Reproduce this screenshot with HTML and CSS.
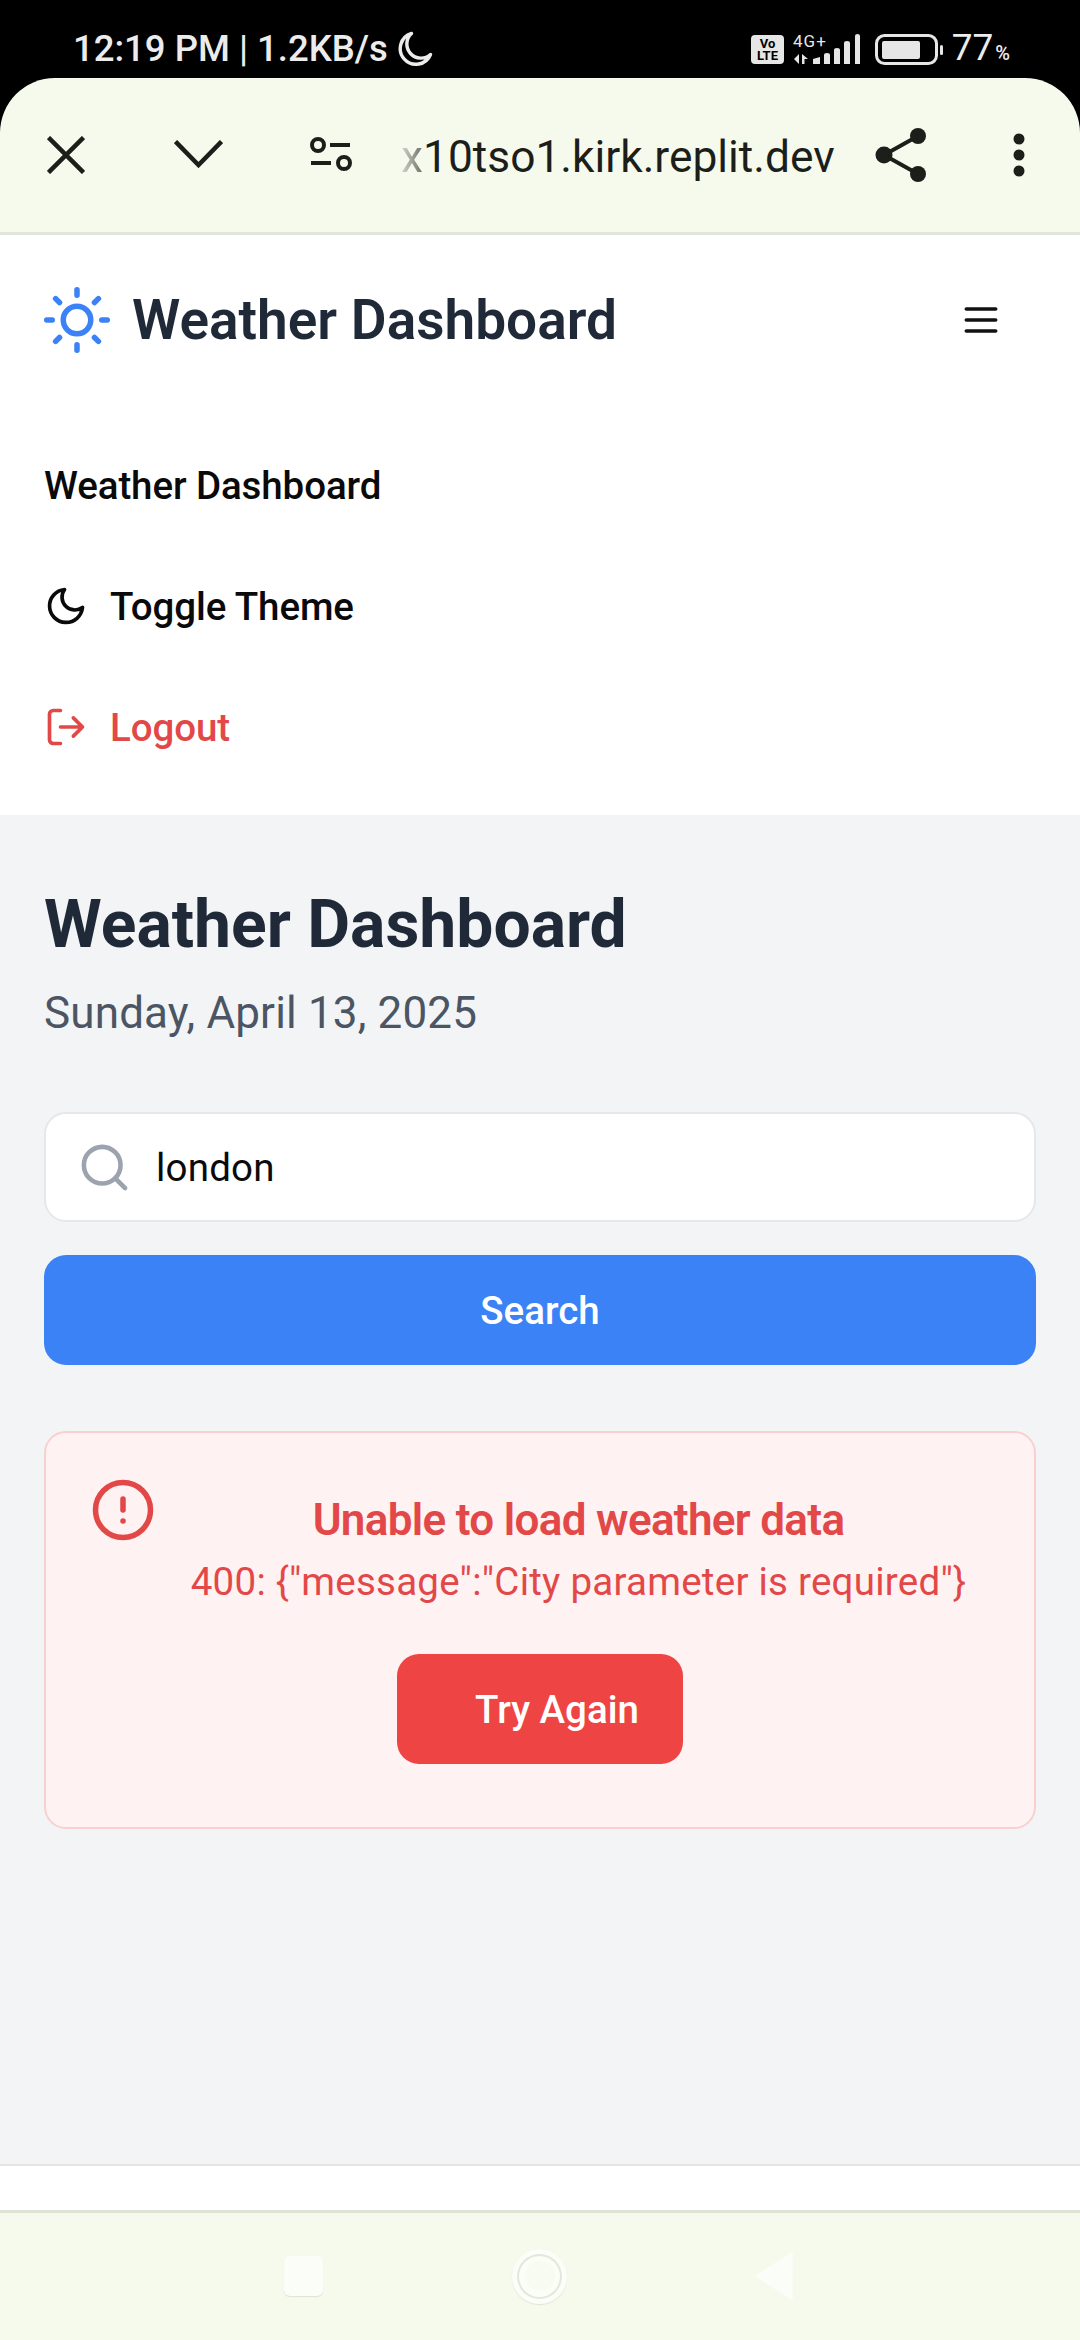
FILE: index.html
```html
<!DOCTYPE html>
<html lang="en">
<head>
<meta charset="UTF-8" />
<title>Weather Dashboard</title>
<meta name="viewport" content="width=device-width,initial-scale=1" />
<link rel="stylesheet" href="styles.css">
</head>
<body>
<div class="status-bar">
  <div class="status-left">
    <span class="status-time">12:19 PM | 1.2KB/s</span>
    <svg class="status-moon" width="36" height="36" viewBox="0 0 36 36" fill="none" stroke="#ececec" stroke-width="3.4"><path d="M33.5 23.5A15.7 15.7 0 1 1 14.5 2.5 13.5 13.5 0 0 0 33.5 23.5z" stroke-linejoin="round"/></svg>
  </div>
  <div class="status-right">
    <svg class="net-icons" width="112" height="34" viewBox="0 0 112 34">
      <rect x="0" y="2" width="33" height="29" rx="4" fill="#e6e6e6"/>
      <text x="16.5" y="14.5" class="volte-text">Vo</text>
      <text x="16.5" y="27" class="volte-text">LTE</text>
      <text x="42" y="14" class="net-text">4G+</text>
      <path d="M48 21v10l-5-5zM51 21l6 5h-3.500V31H51z" fill="#e6e6e6"/>
      <path d="M62 26l7-2v7h-7zM73 22q0-2 3-2t3 2v9h-6zM83 17q0-2 3-2t3 2v14h-6zM93 10q0-2 3-2t3 2v21h-6zM104 3q0-2 2.500-2t2.500 2v28h-5z" fill="#e6e6e6"/>
    </svg>
    <svg class="battery" width="70" height="32" viewBox="0 0 70 32">
      <rect x="1.500" y="1.500" width="60" height="28" rx="8" fill="none" stroke="#e6e6e6" stroke-width="3"/>
      <rect x="7" y="7" width="38" height="18" rx="2" fill="#e6e6e6"/>
      <rect x="65" y="11" width="3" height="10" rx="1.500" fill="#e6e6e6"/>
    </svg>
    <span class="battery-num">77<span class="battery-pct">%</span></span>
  </div>
</div>

<div class="toolbar">
  <svg class="tb-close" width="38" height="38" viewBox="0 0 38 38" fill="none" stroke="#1c1e1a" stroke-width="4.500"><path d="M1.500 1.500l35 35M36.500 1.500l-35 35"/></svg>
  <svg class="tb-chevron" width="49" height="28" viewBox="0 0 49 28" fill="none" stroke="#1c1e1a" stroke-width="4.500"><path d="M1.500 1.500L24.500 25 47.500 1.500"/></svg>
  <svg class="tb-tune" width="42" height="36" viewBox="0 0 42 36" fill="none" stroke="#1c1e1a" stroke-width="4"><circle cx="8" cy="8" r="6"/><path d="M20 8h20M1 26h20"/><circle cx="34" cy="26" r="6"/></svg>
  <div class="tb-url"><span class="tb-url-fade">x</span>10tso1.kirk.replit.dev</div>
  <svg class="tb-share" width="52" height="56" viewBox="0 0 52 56" fill="#1c1e1a" stroke="#1c1e1a"><circle cx="43" cy="9" r="8" stroke="none"/><circle cx="9" cy="28" r="8.500" stroke="none"/><circle cx="43" cy="47" r="8" stroke="none"/><path d="M43 9L9 28l34 19" fill="none" stroke-width="4"/></svg>
  <svg class="tb-more" width="12" height="44" viewBox="0 0 12 44" fill="#1c1e1a"><circle cx="6" cy="6" r="5.500"/><circle cx="6" cy="22" r="5.500"/><circle cx="6" cy="38" r="5.500"/></svg>
</div>

<header class="site-header">
  <div class="brand-row">
    <div class="brand">
      <svg class="icon-lg" viewBox="0 0 24 24" fill="none" stroke="#3b82f6" stroke-width="2" stroke-linecap="round" stroke-linejoin="round"><circle cx="12" cy="12" r="5"/><path d="M12 1v2M12 21v2M4.220 4.220l1.420 1.420M18.360 18.360l1.420 1.420M1 12h2M21 12h2M4.220 19.780l1.420-1.420M18.360 5.640l1.420-1.420"/></svg>
      <span class="brand-name">Weather Dashboard</span>
    </div>
    <svg class="menu-btn icon-md" viewBox="0 0 24 24" fill="none" stroke="#111" stroke-width="2" stroke-linecap="round"><path d="M4 6h16M4 12h16M4 18h16"/></svg>
  </div>
  <nav class="nav-list">
    <div class="nav-item">Weather Dashboard</div>
    <div class="nav-item">
      <svg class="icon-md" viewBox="0 0 24 24" fill="none" stroke="currentColor" stroke-width="2" stroke-linecap="round" stroke-linejoin="round"><path d="M21 12.790A9 9 0 1 1 11.210 3 7 7 0 0 0 21 12.790z"/></svg>
      Toggle Theme
    </div>
    <div class="nav-item nav-logout">
      <svg class="icon-md" viewBox="0 0 24 24" fill="none" stroke="currentColor" stroke-width="2" stroke-linecap="round" stroke-linejoin="round"><path d="M9 21H5a2 2 0 0 1-2-2V5a2 2 0 0 1 2-2h4M16 17l5-5-5-5M21 12H9"/></svg>
      Logout
    </div>
  </nav>
</header>

<main class="content">
  <h1 class="page-title">Weather Dashboard</h1>
  <p class="page-date">Sunday, April 13, 2025</p>

  <div class="search-box">
    <svg class="search-icon" viewBox="0 0 24 24" fill="none" stroke="#9ca3af" stroke-width="2" stroke-linecap="round"><circle cx="11" cy="11" r="8"/><path d="M21 21l-4.300-4.300"/></svg>
    <input class="search-input" type="text" value="london" />
  </div>
  <button class="search-btn">Search</button>

  <div class="error-card">
    <div class="error-top">
      <svg class="icon-lg error-icon" viewBox="0 0 24 24" fill="none" stroke="currentColor" stroke-width="2" stroke-linecap="round"><circle cx="12" cy="12" r="10"/><path d="M12 8v4M12 16h.01"/></svg>
      <div class="error-text">
        <div class="error-title">Unable to load weather data</div>
        <div class="error-msg">400: {"message":"City parameter is required"}</div>
      </div>
    </div>
    <div class="error-actions">
      <button class="retry-btn">Try Again</button>
    </div>
  </div>
</main>

<div class="footer-strip"></div>

<div class="nav-bar">
  <div class="nav-square"></div>
  <div class="nav-circle"><div class="nav-dot"></div></div>
  <svg class="nav-back" width="38" height="48" viewBox="0 0 38 48"><path d="M37 1v46L1 24z" fill="#fbfdf8" stroke="#fbfdf8" stroke-width="1.500" stroke-linejoin="round"/></svg>
</div>
</body>
</html>
```

FILE: styles.css
```css
* {
  box-sizing: border-box;
}
html, body {
  margin: 0;
  padding: 0;
}
body {
  width: 1080px;
  height: 2340px;
  overflow: hidden;
  display: flex;
  flex-direction: column;
  background: #000;
  color: #0a0a0a;
  font-family: Roboto, 'Noto Sans', Arial, sans-serif;
}

/* phone status bar */
.status-bar {
  height: 78px;
  flex: none;
  display: flex;
  justify-content: space-between;
  align-items: center;
  padding: 20px 70px 0 73px;
  color: #ececec;
  background: #000;
}
.status-left {
  display: flex;
  align-items: center;
  gap: 9px;
}
.status-time {
  font-size: 36.500px;
  font-weight: 500;
  line-height: 42px;
}
.status-right {
  display: flex;
  align-items: center;
  margin-top: 2px;
}
.net-icons {
  overflow: visible;
}
.volte-text {
  font-size: 13px;
  font-weight: 700;
  text-anchor: middle;
  fill: #000;
}
.net-text {
  font-size: 17px;
  letter-spacing: 1px;
  fill: #e6e6e6;
}
.battery {
  margin-left: 12px;
}
.battery-num {
  font-size: 37px;
  line-height: 40px;
  margin-left: 7px;
  white-space: nowrap;
}
.battery-pct {
  font-size: 20px;
  font-weight: 500;
  margin-left: 2px;
}

/* browser toolbar */
.toolbar {
  height: 157px;
  flex: none;
  display: flex;
  align-items: center;
  background: #f6faed;
  border-bottom: 3px solid #e2e6d8;
  border-radius: 55px 55px 0 0;
  padding-left: 47px;
  color: #1c1e1a;
}
.toolbar svg {
  flex: none;
}
.tb-close {
  margin-top: -1px;
}
.tb-chevron {
  margin-left: 89px;
  margin-top: -2px;
}
.tb-tune {
  margin-left: 87px;
  margin-top: -1px;
}
.tb-url {
  margin-left: 49px;
  font-size: 44.300px;
  line-height: 48px;
  white-space: nowrap;
  margin-top: 4px;
}
.tb-url-fade {
  background: linear-gradient(90deg, #d6d8ce, #6c6e66);
  -webkit-background-clip: text;
  background-clip: text;
  color: transparent;
}
.tb-share {
  margin-left: 40px;
}
.tb-more {
  margin-left: 86px;
}

/* site header + open menu */
.site-header {
  flex: none;
  background: #fff;
  padding: 0 44px 28px;
}
.brand-row {
  height: 170px;
  display: flex;
  align-items: center;
  justify-content: space-between;
  padding-right: 33px;
}
.brand {
  display: flex;
  align-items: center;
  gap: 22px;
}
.brand-name {
  font-size: 55px;
  font-weight: 600;
  line-height: 77px;
  color: #1f2937;
}
.icon-lg {
  width: 66px;
  height: 66px;
  flex: none;
}
.icon-md {
  width: 44px;
  height: 44px;
  flex: none;
}
.nav-list {
  margin-top: 19px;
}
.nav-item {
  height: 121px;
  display: flex;
  align-items: center;
  gap: 22px;
  font-size: 38.500px;
  font-weight: 500;
  line-height: 55px;
  letter-spacing: -0.100px;
  padding-top: 1px;
}
.nav-logout {
  color: #e34848;
}

/* main content */
.content {
  flex: 1;
  background: #f3f4f6;
  padding: 66px 44px 0;
}
.page-title {
  margin: 0;
  font-size: 66px;
  font-weight: 700;
  line-height: 88px;
  color: #1f2937;
}
.page-date {
  margin: 11px 0 66px;
  font-size: 44px;
  line-height: 66px;
  letter-spacing: 0.150px;
  color: #4b5563;
}
.search-box {
  position: relative;
}
.search-icon {
  position: absolute;
  left: 33px;
  top: 27.500px;
  width: 55px;
  height: 55px;
}
.search-input {
  display: block;
  width: 100%;
  height: 110px;
  padding: 0 44px 0 110px;
  background: #fff;
  border: 2.750px solid #e5e7eb;
  border-radius: 22px;
  font-family: inherit;
  font-size: 38.500px;
  letter-spacing: 0.200px;
  color: #0a0a0a;
  outline: none;
}
.search-btn {
  display: block;
  width: 100%;
  height: 110px;
  margin-top: 33px;
  background: #3b82f6;
  color: #fff;
  border: none;
  border-radius: 22px;
  font-family: inherit;
  font-size: 38.500px;
  font-weight: 500;
}

/* error card */
.error-card {
  margin-top: 66px;
  height: 398px;
  padding: 44px;
  background: #fef2f2;
  border: 2.750px solid #f9d0d0;
  border-radius: 22px;
}
.error-top {
  display: flex;
  align-items: flex-start;
  gap: 11px;
}
.error-icon {
  color: #e34848;
}
.error-text {
  flex: 1;
  text-align: center;
  color: #e34848;
}
.error-title {
  font-size: 44px;
  font-weight: 600;
  line-height: 66px;
  letter-spacing: -0.680px;
  margin-top: 10px;
}
.error-msg {
  font-size: 38.500px;
  line-height: 55px;
  letter-spacing: 0.250px;
  margin-top: 1px;
}
.error-actions {
  display: flex;
  justify-content: center;
  margin-top: 45px;
}
.retry-btn {
  height: 110px;
  padding: 0 44px 0 78px;
  background: #ef4444;
  color: #fff;
  border: none;
  border-radius: 22px;
  font-family: inherit;
  font-size: 38.500px;
  font-weight: 500;
}

/* bottom strips */
.footer-strip {
  height: 49px;
  flex: none;
  background: #fff;
  border-top: 2px solid #e5e5e5;
  border-bottom: 3px solid #dfe3d3;
}
.nav-bar {
  height: 127px;
  flex: none;
  background: #f6faed;
  display: flex;
  align-items: center;
  padding-left: 284px;
}
.nav-square {
  width: 39px;
  height: 40px;
  border-radius: 6px;
  background: #fbfdf8;
  box-shadow: 0 1px 1px #dfe3d3;
  margin-top: -1px;
}
.nav-circle {
  width: 55px;
  height: 55px;
  margin-left: 189px;
  border-radius: 50%;
  background: #fbfdf6;
  box-shadow: inset 0 0 0 5px #fbfdf8, inset 0 0 0 7px #e4e7da, 0 1px 1px #dfe3d3;
  display: flex;
  align-items: center;
  justify-content: center;
  margin-top: -1px;
}
.nav-dot {
  width: 30px;
  height: 30px;
  border-radius: 50%;
  background: #f8fbf1;
}
.nav-back {
  margin-left: 188px;
  margin-top: -1px;
}
```
